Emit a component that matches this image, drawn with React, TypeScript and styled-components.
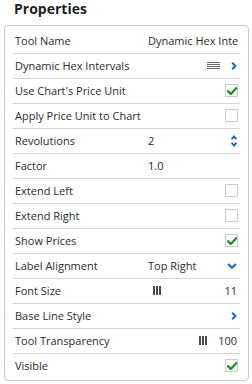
import React from "react";
import styled, { createGlobalStyle } from "styled-components";

const Global = createGlobalStyle`
  html, body { margin: 0; padding: 0; background: #ffffff; }
  body { font-family: "Open Sans", "Liberation Sans", sans-serif; color: #2b2b2b; }
`;

const Page = styled.div`
  width: 252px;
  height: 384px;
  box-sizing: border-box;
  padding: 0 3px 0 4px;
  display: flex;
  flex-direction: column;
`;

const Title = styled.h1`
  margin: 0;
  padding: 0 0 0 10px;
  height: 25px;
  font-size: 14px;
  line-height: 17px;
  font-weight: 700;
  color: #1f1f1f;
`;

const Panel = styled.div`
  border: 1px solid #c9c9c9;
  border-radius: 4px;
  padding: 3px 8px 2px 8px;
  display: flex;
  flex-direction: column;
`;

const Row = styled.div<{ $last?: boolean }>`
  height: 24px;
  flex: none;
  display: flex;
  align-items: center;
  border-bottom: ${(p) => (p.$last ? "none" : "1px solid #d4d4d4")};
  font-size: 11px;
  line-height: 15px;
  padding-bottom: 1px;
  box-sizing: border-box;
  height: ${(p) => (p.$last ? "24px" : "25px")};
`;

const Label = styled.div<{ $wide?: boolean }>`
  width: ${(p) => (p.$wide ? "auto" : "135px")};
  flex: ${(p) => (p.$wide ? "1" : "none")};
  padding-left: 2px;
  box-sizing: border-box;
  white-space: nowrap;
  color: #2b2b2b;
`;

const Value = styled.div<{ $right?: boolean }>`
  flex: 1;
  min-width: 0;
  overflow: hidden;
  white-space: nowrap;
  text-align: ${(p) => (p.$right ? "right" : "left")};
  padding-right: ${(p) => (p.$right ? "2px" : "0")};
  color: #2b2b2b;
`;

const Controls = styled.div`
  display: flex;
  align-items: center;
  gap: 11px;
  padding-right: 3px;
  margin-left: auto;
`;

const Num = styled.span`
  color: #2b2b2b;
`;

const Box = styled.div`
  width: 11px;
  height: 11px;
  border: 1px solid #cbcbcb;
  background: #fff;
  display: flex;
  align-items: center;
  justify-content: center;
  margin-right: -1px;
`;

const Bars = styled.div<{ $indent?: number }>`
  display: flex;
  gap: 1px;
  height: 9px;
  margin-left: ${(p) => p.$indent ?? 0}px;
  span { width: 2px; height: 9px; background: #4a4a4a; }
`;

const Check = ({ on }: { on?: boolean }) => (
  <Box>
    {on && (
      <svg width="10" height="8" viewBox="0 0 10 8">
        <path d="M1 4.2 L3.8 7 L9.2 1.3" fill="none" stroke="#1c8a1c" strokeWidth="2.2" strokeLinecap="square" />
      </svg>
    )}
  </Box>
);

const ChevronRight = () => (
  <svg width="6" height="8" viewBox="0 0 6 8">
    <path d="M1.2 0.8 L4.4 4 L1.2 7.2" fill="none" stroke="#1768c2" strokeWidth="2" />
  </svg>
);

const ChevronDown = () => (
  <svg width="10" height="6" viewBox="0 0 10 6">
    <path d="M1 0.9 L5 4.6 L9 0.9" fill="none" stroke="#1768c2" strokeWidth="2.1" />
  </svg>
);

const Spinner = () => (
  <svg width="6" height="12" viewBox="0 0 6 12">
    <path d="M0.6 4.2 L3 1.5 L5.4 4.2" fill="none" stroke="#1768c2" strokeWidth="1.9" />
    <path d="M0.6 7.8 L3 10.5 L5.4 7.8" fill="none" stroke="#1768c2" strokeWidth="1.9" />
  </svg>
);

const Lines = () => (
  <svg width="13" height="8" viewBox="0 0 13 8">
    {[0.5, 2.5, 4.5, 6.5].map((y) => (
      <line key={y} x1="0" x2="13" y1={y} y2={y} stroke="#6a6a6a" strokeWidth="1" />
    ))}
  </svg>
);

const BarIcon = ({ indent }: { indent?: number }) => (
  <Bars $indent={indent}>
    <span />
    <span />
    <span />
  </Bars>
);

export default function App() {
  return (
    <>
      <Global />
      <Page>
        <Title>Properties</Title>
        <Panel>
          <Row>
            <Label>Tool Name</Label>
            <Value $right>Dynamic Hex Inte</Value>
          </Row>
          <Row>
            <Label $wide>Dynamic Hex Intervals</Label>
            <Controls>
              <Lines />
              <ChevronRight />
            </Controls>
          </Row>
          <Row>
            <Label $wide>Use Chart's Price Unit</Label>
            <Controls><Check on /></Controls>
          </Row>
          <Row>
            <Label $wide>Apply Price Unit to Chart</Label>
            <Controls><Check /></Controls>
          </Row>
          <Row>
            <Label>Revolutions</Label>
            <Value>2</Value>
            <Controls><Spinner /></Controls>
          </Row>
          <Row>
            <Label>Factor</Label>
            <Value>1.0</Value>
          </Row>
          <Row>
            <Label $wide>Extend Left</Label>
            <Controls><Check /></Controls>
          </Row>
          <Row>
            <Label $wide>Extend Right</Label>
            <Controls><Check /></Controls>
          </Row>
          <Row>
            <Label $wide>Show Prices</Label>
            <Controls><Check on /></Controls>
          </Row>
          <Row>
            <Label>Label Alignment</Label>
            <Value>Top Right</Value>
            <Controls><ChevronDown /></Controls>
          </Row>
          <Row>
            <Label>Font Size</Label>
            <Value><BarIcon indent={5} /></Value>
            <Controls><Num>11</Num></Controls>
          </Row>
          <Row>
            <Label $wide>Base Line Style</Label>
            <Controls><ChevronRight /></Controls>
          </Row>
          <Row>
            <Label $wide>Tool Transparency</Label>
            <Controls><BarIcon /><Num>100</Num></Controls>
          </Row>
          <Row $last>
            <Label $wide>Visible</Label>
            <Controls><Check on /></Controls>
          </Row>
        </Panel>
      </Page>
    </>
  );
}
